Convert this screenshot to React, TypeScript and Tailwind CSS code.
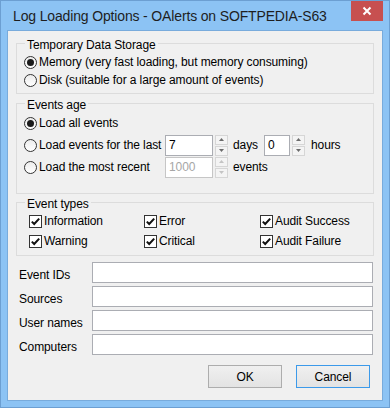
import type { ReactNode } from "react";

function Radio({ checked }: { checked?: boolean }) {
  return (
    <span className="flex h-[13px] w-[13px] shrink-0 items-center justify-center rounded-full border border-[#333333] bg-gradient-to-b from-[#ececec] to-[#ffffff]">
      {checked && <span className="h-[7px] w-[7px] rounded-full bg-[#1b1b1b]" />}
    </span>
  );
}

function Check() {
  return (
    <span className="flex h-[13px] w-[13px] shrink-0 items-center justify-center border border-[#333333] bg-white">
      <svg width="11" height="11" viewBox="0 0 11 11">
        <path d="M1.8 5.6 L4.2 8 L9.2 2.6" fill="none" stroke="#111" strokeWidth="2" />
      </svg>
    </span>
  );
}

function Spinner({ disabled }: { disabled?: boolean }) {
  const arrow = disabled ? "#c4c4c4" : "#6b6b6b";
  return (
    <div className="flex h-[21px] w-[13px] shrink-0 flex-col justify-between">
      <span className="flex h-[10px] items-center justify-center border border-[#d6d6d6] bg-[#f4f4f4]">
        <svg width="5" height="3" viewBox="0 0 5 3">
          <path d="M0 3 L2.5 0 L5 3Z" fill={arrow} />
        </svg>
      </span>
      <span className="flex h-[10px] items-center justify-center border border-[#d6d6d6] bg-[#f4f4f4]">
        <svg width="5" height="3" viewBox="0 0 5 3">
          <path d="M0 0 L2.5 3 L5 0Z" fill={arrow} />
        </svg>
      </span>
    </div>
  );
}

function NumBox({ value, width, disabled }: { value: string; width: string; disabled?: boolean }) {
  return (
    <div className="flex items-center gap-[2px]">
      <div
        className={`flex h-[21px] ${width} items-center bg-white pl-[3px] ${
          disabled ? "border border-[#c6c6c6] text-[#a6a6a6]" : "border border-[#abadb3]"
        }`}
      >
        {value}
      </div>
      <Spinner disabled={disabled} />
    </div>
  );
}

function Group({ title, className, children }: { title: string; className: string; children: ReactNode }) {
  return (
    <div className={`relative mx-[8px] border border-[#dcdcdc] ${className}`}>
      <span className="absolute -top-[6px] left-[8px] bg-[#f0f0f0] px-[2px] leading-[14px]">{title}</span>
      {children}
    </div>
  );
}

function Field({ label }: { label: string }) {
  return (
    <div className="flex h-[21px] items-start pl-[11px] pr-[9px]">
      <span className="w-[73px] pt-[6px] leading-[14px]">{label}</span>
      <div className="h-[21px] flex-1 border border-[#abadb3] bg-white" />
    </div>
  );
}

const types = ["Information", "Error", "Audit Success", "Warning", "Critical", "Audit Failure"];

export default function App() {
  return (
    <div className="flex h-[408px] w-[390px] flex-col border border-[#6c9fd2] bg-[#8cc3f4] px-[6px] pb-[6px] font-['Liberation_Sans',Arial,sans-serif] text-[12px] tracking-[-0.1px] text-black">
      <div className="flex h-[29px] items-start">
        <span className="mt-[5px] flex-1 whitespace-nowrap pl-[6px] text-[14px] leading-[20px] tracking-[-0.15px] text-[#1e1e1e]">
          Log Loading Options - OAlerts on SOFTPEDIA-S63
        </span>
        <div className="flex h-[20px] w-[32px] shrink-0 items-center justify-center bg-[#c75050]">
          <svg width="10" height="10" viewBox="0 0 10 10">
            <path d="M1.5 1.5 L8.5 8.5 M8.5 1.5 L1.5 8.5" stroke="#fff" strokeWidth="2" />
          </svg>
        </div>
      </div>

      <div className="flex flex-1 flex-col border border-[#78abdc] bg-[#f0f0f0]">
        <Group title="Temporary Data Storage" className="mt-[12px] pb-[4px] pl-[7px] pt-[9px]">
          <div className="flex h-[18px] items-center gap-[2px]">
            <Radio checked />
            <span>Memory (very fast loading, but memory consuming)</span>
          </div>
          <div className="flex h-[18px] items-center gap-[2px]">
            <Radio />
            <span>Disk (suitable for a large amount of events)</span>
          </div>
        </Group>

        <Group title="Events age" className="mt-[9px] pb-[15px] pl-[7px] pt-[8px]">
          <div className="flex h-[22px] items-center gap-[2px]">
            <Radio checked />
            <span>Load all events</span>
          </div>
          <div className="flex h-[22px] items-center">
            <div className="flex w-[141px] items-center gap-[2px]">
              <Radio />
              <span>Load events for the last</span>
            </div>
            <NumBox value="7" width="w-[48px]" />
            <span className="w-[36px] pl-[5px]">days</span>
            <NumBox value="0" width="w-[26px]" />
            <span className="pl-[6px]">hours</span>
          </div>
          <div className="flex h-[22px] items-center">
            <div className="flex w-[141px] items-center gap-[2px]">
              <Radio />
              <span>Load the most recent</span>
            </div>
            <NumBox value="1000" width="w-[48px]" disabled />
            <span className="pl-[5px]">events</span>
          </div>
        </Group>

        <Group title="Event types" className="mt-[8px] grid grid-cols-[115px_116px_1fr] pb-[4px] pl-[12px] pt-[8px]">
          {types.map((t) => (
            <div key={t} className="flex h-[20px] items-center gap-[2px]">
              <Check />
              <span>{t}</span>
            </div>
          ))}
        </Group>

        <div className="mt-[6px] flex flex-col gap-[3px]">
          <Field label="Event IDs" />
          <Field label="Sources" />
          <Field label="User names" />
          <Field label="Computers" />
        </div>

        <div className="mt-[10px] flex justify-end gap-[14px] pr-[12px]">
          <button className="h-[23px] w-[74px] border border-[#adadad] bg-gradient-to-b from-[#f0f0f0] to-[#e3e3e3]">
            OK
          </button>
          <button className="h-[23px] w-[74px] border border-[#3c9aea] bg-gradient-to-b from-[#f0f0f0] to-[#e3e3e3]">
            Cancel
          </button>
        </div>
      </div>
    </div>
  );
}
